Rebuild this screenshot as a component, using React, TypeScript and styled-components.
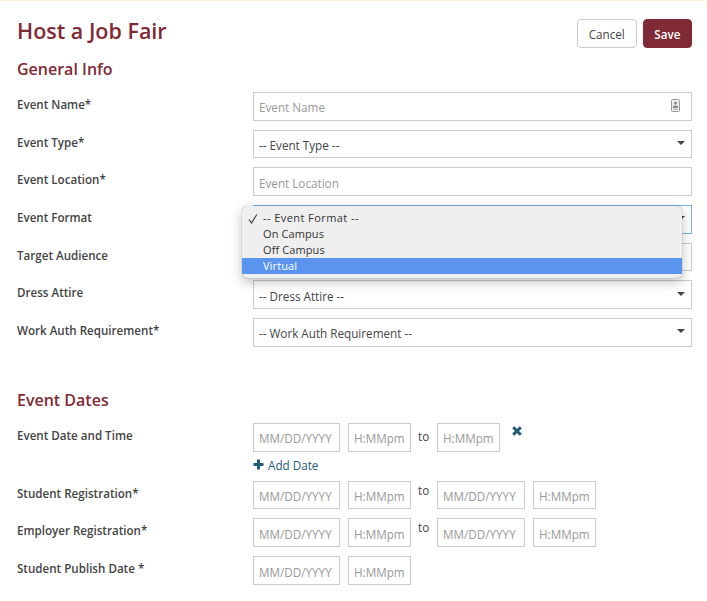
import React from 'react';
import styled, { createGlobalStyle } from 'styled-components';

const GlobalStyle = createGlobalStyle`
  html, body {
    margin: 0;
    padding: 0;
    background: #fff;
    font-family: "Open Sans", "Noto Sans", sans-serif;
    color: #444;
  }
`;

const Page = styled.div`
  width: 707px;
  height: 601px;
  box-sizing: border-box;
  overflow: hidden;
  border-top: 1px solid #fdf3d3;
  padding: 16px 15px 0 17px;
`;

const Header = styled.header`
  display: flex;
  justify-content: space-between;
  align-items: flex-start;
  height: 40px;
`;

const Title = styled.h1`
  margin: 0;
  font-size: 21.5px;
  line-height: 28px;
  font-weight: 600;
  color: #7f2a35;
`;

const Actions = styled.div`
  display: flex;
  gap: 6px;
  margin-top: 2px;
`;

const Button = styled.button<{ $primary?: boolean }>`
  height: 29px;
  box-sizing: border-box;
  padding: 0 ${(p) => (p.$primary ? 10.5 : 11)}px;
  border-radius: 4px;
  border: 1px solid ${(p) => (p.$primary ? '#7f2a35' : '#ccc')};
  background: ${(p) => (p.$primary ? '#7f2a35' : '#fff')};
  color: ${(p) => (p.$primary ? '#fff' : '#444')};
  font-family: inherit;
  font-size: 11.7px;
  font-weight: ${(p) => (p.$primary ? 600 : 400)};
`;

const SectionTitle = styled.h2<{ $top?: number; $bottom: number }>`
  margin: ${(p) => p.$top ?? 0}px 0 ${(p) => p.$bottom}px;
  height: 24px;
  font-size: 16px;
  line-height: 24px;
  font-weight: 600;
  color: #7f2a35;
`;

const Row = styled.div<{ $gap?: number }>`
  display: grid;
  grid-template-columns: 236px 439px;
  margin-bottom: ${(p) => p.$gap ?? 9}px;
`;

const Label = styled.label`
  font-size: 11.6px;
  line-height: 20px;
  font-weight: 600;
  color: #444;
  margin-top: 3px;
`;

const Field = styled.div`
  position: relative;
`;

const TextInput = styled.input<{ $width?: number }>`
  display: block;
  box-sizing: border-box;
  width: ${(p) => (p.$width ? `${p.$width}px` : '100%')};
  height: 28.7px;
  padding: 2px 5px 0;
  border: 1px solid #ccc;
  border-radius: 0;
  outline: none;
  background: #fff;
  font-family: inherit;
  font-size: 11.7px;
  color: #444;
  &::placeholder {
    color: #999;
    opacity: 1;
  }
`;

const SelectBox = styled.div<{ $focused?: boolean }>`
  display: flex;
  align-items: center;
  justify-content: space-between;
  box-sizing: border-box;
  height: 28.7px;
  padding: 2px 6px 0 5px;
  border: 1px solid ${(p) => (p.$focused ? '#7fb0e0' : '#ccc')};
  font-size: 11.7px;
  color: #444;
`;

const Caret = styled.svg`
  margin-bottom: 4px;
`;

const FieldIcon = styled.svg`
  position: absolute;
  top: 7px;
  right: 12px;
`;

const Menu = styled.ul`
  position: absolute;
  top: 1px;
  left: -11px;
  width: 440px;
  box-sizing: border-box;
  margin: 0;
  padding: 4px 0;
  list-style: none;
  background: #efefef;
  border-radius: 5px;
  box-shadow: 0 0 1px rgba(0, 0, 0, 0.45), 0 4px 12px rgba(0, 0, 0, 0.25);
  z-index: 2;
`;

const MenuItem = styled.li<{ $active?: boolean; $wide?: boolean }>`
  position: relative;
  height: 16px;
  padding-left: 21px;
  font-size: 11px;
  line-height: 16px;
  letter-spacing: ${(p) => (p.$wide ? 0.43 : 0.1)}px;
  background: ${(p) => (p.$active ? '#5a94ee' : 'transparent')};
  color: ${(p) => (p.$active ? '#fff' : '#333')};
`;

const Check = styled.svg`
  position: absolute;
  left: 6px;
  top: 4px;
`;

const DateFields = styled.div`
  display: flex;
  align-items: flex-start;
  gap: 8px;
`;

const To = styled.span<{ $top?: number }>`
  width: 11px;
  margin: ${(p) => p.$top ?? 3}px 0 0 -1px;
  font-size: 11.7px;
  line-height: 20px;
  text-align: center;
  color: #444;
`;

const RemoveIcon = styled.svg`
  margin: 2px 0 0 3px;
`;

const AddDate = styled.a`
  display: flex;
  align-items: center;
  gap: 4px;
  height: 20px;
  margin: 3px 0 6px;
  font-size: 11.7px;
  color: #1f5c78;
`;

const generalRows = [
  { label: 'Event Name*', kind: 'contact', text: 'Event Name' },
  { label: 'Event Type*', kind: 'select', text: '-- Event Type --' },
  { label: 'Event Location*', kind: 'input', text: 'Event Location' },
  { label: 'Event Format', kind: 'menu', text: '-- Event Format --' },
  { label: 'Target Audience', kind: 'input', text: '' },
  { label: 'Dress Attire', kind: 'select', text: '-- Dress Attire --' },
  { label: 'Work Auth Requirement*', kind: 'select', text: '-- Work Auth Requirement --' },
];

const menuOptions = ['-- Event Format --', 'On Campus', 'Off Campus', 'Virtual'];

const renderField = (kind: string, text: string) => {
  if (kind === 'contact') {
    return (
      <>
        <TextInput placeholder={text} />
        <FieldIcon width="9" height="13" viewBox="0 0 9 13">
          <rect x="0.5" y="0.5" width="8" height="12" rx="1" fill="#eee" stroke="#999" />
          <circle cx="4.5" cy="4.2" r="1.4" fill="#888" />
          <path d="M2 9V7.6C2 6.9 3 6.5 4.5 6.5S7 6.9 7 7.6V9z" fill="#888" />
          <path d="M2 10.3h5" stroke="#aaa" />
        </FieldIcon>
      </>
    );
  }
  if (kind === 'input') return <TextInput placeholder={text} />;
  return (
    <>
      <SelectBox $focused={kind === 'menu'}>
        <span>{text}</span>
        <Caret width="8" height="4" viewBox="0 0 8 4">
          <path d="M0 0h8L4 4z" fill="#444" />
        </Caret>
      </SelectBox>
      {kind === 'menu' && (
        <Menu>
          {menuOptions.map((option, index) => (
            <MenuItem key={option} $active={option === 'Virtual'} $wide={index === 0}>
              {index === 0 && (
                <Check width="10" height="10" viewBox="0 0 10 10">
                  <path d="M1 5.5L3.5 9L8.8 0.5" fill="none" stroke="#333" strokeWidth="1.1" />
                </Check>
              )}
              {option}
            </MenuItem>
          ))}
        </Menu>
      )}
    </>
  );
};

const App = () => (
  <Page>
    <GlobalStyle />
    <Header>
      <Title>Host a Job Fair</Title>
      <Actions>
        <Button>Cancel</Button>
        <Button $primary>Save</Button>
      </Actions>
    </Header>

    <SectionTitle $bottom={11}>General Info</SectionTitle>
    {generalRows.map((row) => (
      <Row key={row.label}>
        <Label>{row.label}</Label>
        <Field>{renderField(row.kind, row.text)}</Field>
      </Row>
    ))}

    <SectionTitle $top={41} $bottom={11}>Event Dates</SectionTitle>
    <Row $gap={0}>
      <Label>Event Date and Time</Label>
      <div>
        <DateFields>
          <TextInput $width={87} placeholder="MM/DD/YYYY" />
          <TextInput $width={63} placeholder="H:MMpm" />
          <To>to</To>
          <TextInput $width={63} placeholder="H:MMpm" />
          <RemoveIcon width="12" height="12" viewBox="0 0 12 12">
            <path d="M2.2 2.2l7.6 7.6M9.8 2.2l-7.6 7.6" stroke="#1f5c78" strokeWidth="3" />
          </RemoveIcon>
        </DateFields>
        <AddDate>
          <svg width="11" height="11" viewBox="0 0 11 11">
            <path d="M5.5 0.5v10M0.5 5.5h10" stroke="#1f5c78" strokeWidth="3" />
          </svg>
          Add Date
        </AddDate>
      </div>
    </Row>
    {['Student Registration*', 'Employer Registration*'].map((label) => (
      <Row key={label} $gap={9.3}>
        <Label>{label}</Label>
        <DateFields>
          <TextInput $width={87} placeholder="MM/DD/YYYY" />
          <TextInput $width={63} placeholder="H:MMpm" />
          <To $top={-1}>to</To>
          <TextInput $width={88} placeholder="MM/DD/YYYY" />
          <TextInput $width={63} placeholder="H:MMpm" />
        </DateFields>
      </Row>
    ))}
    <Row>
      <Label>Student Publish Date *</Label>
      <DateFields>
        <TextInput $width={87} placeholder="MM/DD/YYYY" />
        <TextInput $width={63} placeholder="H:MMpm" />
      </DateFields>
    </Row>
  </Page>
);

export default App;
